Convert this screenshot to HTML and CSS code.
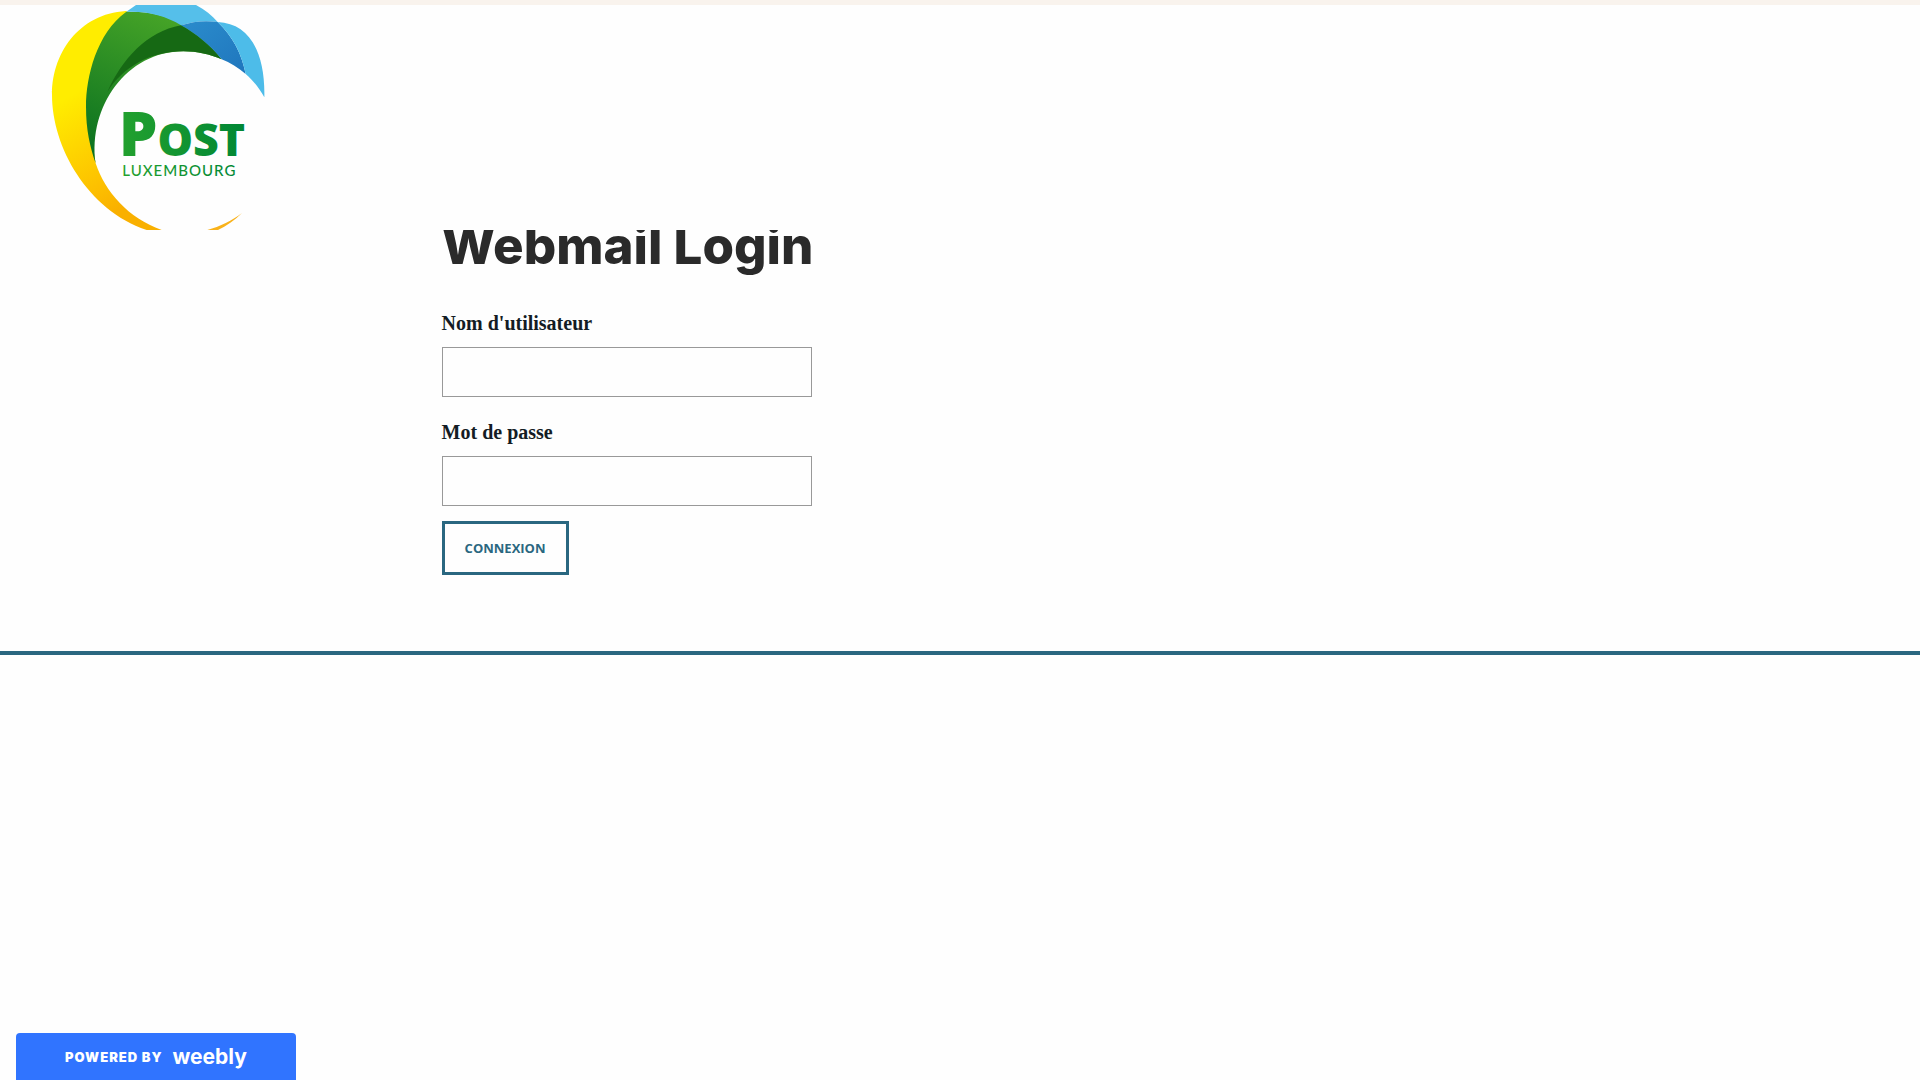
FILE: index.html
```
<!DOCTYPE html>
<html lang="fr">
<head>
  <meta charset="UTF-8">
  <meta name="viewport" content="width=device-width, initial-scale=1.0">
  <title>Webmail Login</title>
  <link rel="stylesheet" href="styles.css">
</head>
<body>
  <header class="header">
    <svg class="logo" viewBox="0 15 960 675" role="img" aria-label="Post Luxembourg">
      <defs>
        <linearGradient id="yellow" x1="0" y1="0" x2="0.3" y2="1">
          <stop offset="0.4" stop-color="#ffed00"/>
          <stop offset="0.85" stop-color="#fdc000"/>
          <stop offset="1" stop-color="#f9b000"/>
        </linearGradient>
        <linearGradient id="green" x1="0.5" y1="0" x2="0.1" y2="1">
          <stop offset="0" stop-color="#45a327"/>
          <stop offset="1" stop-color="#086f20"/>
        </linearGradient>
        <linearGradient id="blue" x1="0" y1="0" x2="1" y2="1">
          <stop offset="0" stop-color="#2b8ccc"/>
          <stop offset="1" stop-color="#1f76bd"/>
        </linearGradient>
        <linearGradient id="word" x1="0" y1="0" x2="1" y2="0">
          <stop offset="0" stop-color="#23a12e"/>
          <stop offset="1" stop-color="#008735"/>
        </linearGradient>
      </defs>
      <path fill="url(#yellow)" d="M390 33C250 33 156 148 156 285C156 440 262 630 440 690H485C385 655 315 575 287 490L258 320L378 36Z"/>
      <path fill="#f9b21a" d="M622 690C660 680 697 661 726 639C704 661 679 679 654 690Z"/>
      <path fill="url(#green)" d="M378 36C290 100 258 230 258 320C258 390 270 440 287 490C264 320 380 154 550 154C592 154 630 163 665 178C595 85 500 30 378 36Z"/>
      <path fill="#166914" d="M322 276C365 180 440 94 543 76C590 102 630 135 665 178C630 163 592 154 550 154C450 154 368 202 322 276Z"/>
      <path fill="#55bfea" d="M378 36L408 15H588C615 29 636 46 653 66C613 60 577 65 543 76C495 47 440 33 378 36Z"/>
      <path fill="url(#blue)" d="M543 76C577 65 613 60 653 66C700 110 726 165 737 222C715 203 690 188 665 178C630 135 590 102 543 76Z"/>
      <path fill="#4dbce9" d="M653 66C747 70 796 154 793 292C778 265 760 242 737 222C726 165 700 110 653 66Z"/>
      <g fill="url(#word)">
        <text class="logo-post" x="356" y="467">P<tspan class="logo-ost">OST</tspan></text>
        <text class="logo-country" x="367" y="528">LUXEMBOURG</text>
      </g>
    </svg>
  </header>

  <main class="main">
    <h1>Webmail Login</h1>
    <form class="login-form">
      <label for="username">Nom d'utilisateur</label>
      <input type="text" id="username" name="username">
      <label for="password">Mot de passe</label>
      <input type="password" id="password" name="password">
      <button type="submit">Connexion</button>
    </form>
  </main>

  <a class="badge" href="#">
    <span class="badge-text">POWERED BY</span>
    <span class="badge-brand">weebly</span>
  </a>
</body>
</html>
```

FILE: styles.css
```
* {
  margin: 0;
  padding: 0;
  box-sizing: border-box;
}

body {
  font-family: 'Liberation Serif', serif;
  background: #fefefe;
  color: #141c24;
  min-height: 100vh;
}

/* sits above the heading and trims its top edge */
.header {
  position: relative;
  z-index: 1;
  background: #fefefe;
  border-top: 5px solid #f9f3ed;
}

.logo {
  display: block;
  width: 320px;
  height: 225px;
}

.logo-post {
  font-family: 'Open Sans', sans-serif;
  font-size: 184px;
  font-weight: 800;
}

.logo-ost {
  font-size: 134px;
}

.logo-country {
  font-family: Lato, sans-serif;
  font-size: 45px;
  font-weight: 500;
  letter-spacing: 3px;
}

.main {
  padding: 0 23% 76px;
  border-bottom: 4px solid #2a6780;
}

h1 {
  font-family: Inter, sans-serif;
  font-size: 51px;
  font-weight: 800;
  line-height: 32px;
  color: #2a2a2a;
  margin-bottom: 48px;
}

.login-form {
  display: flex;
  flex-direction: column;
  align-items: flex-start;
}

label {
  font-size: 20px;
  font-weight: 700;
  line-height: 27px;
  margin-bottom: 10px;
}

input {
  width: 370px;
  max-width: 100%;
  height: 50px;
  padding: 0 16px;
  border: 1px solid #999;
  background: #fefefe;
  font-size: 18px;
  margin-bottom: 22px;
}

button {
  margin-top: -7px;
  padding: 0 20px;
  height: 54px;
  border: 3px solid #2a6780;
  background: transparent;
  color: #2a6780;
  font-family: 'Open Sans', sans-serif;
  font-size: 13px;
  font-weight: 700;
  text-transform: uppercase;
  cursor: pointer;
}

.badge {
  position: fixed;
  left: 16px;
  bottom: 0;
  width: 280px;
  height: 47px;
  display: flex;
  align-items: center;
  justify-content: center;
  gap: 10px;
  background: #3074ff;
  border-radius: 4px 4px 0 0;
  color: white;
  font-family: Inter, sans-serif;
  text-decoration: none;
}

.badge-text {
  font-size: 13px;
  font-weight: 900;
  letter-spacing: 1px;
}

.badge-brand {
  font-size: 21px;
  font-weight: 700;
}
```
